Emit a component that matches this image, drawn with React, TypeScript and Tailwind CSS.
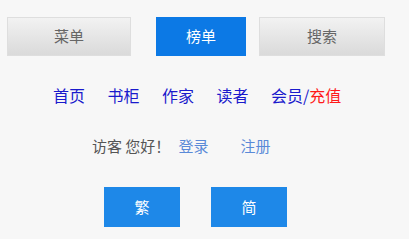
import React from "react";

const font = "font-['Microsoft_YaHei','Noto_Sans_CJK_SC',sans-serif]";

const navItems = ["首页", "书柜", "作家", "读者"];

const App = () => {
  return (
    <div className={`w-[409px] h-[239px] bg-[#f7f7f7] ${font} overflow-hidden`}>
      <div className="w-[391px]">
        {/* 顶部按钮 */}
        <div className="flex pt-[17px] pl-[7px]">
          <a className="w-[124px] h-[39px] flex items-center justify-center border border-[#dedede] bg-gradient-to-b from-[#f2f2f2] to-[#dadada] text-[15px] text-[#666]">
            菜单
          </a>
          <a className="ml-[25px] w-[90px] h-[39px] flex items-center justify-center bg-[#0c79e5] text-[15px] text-white">
            榜单
          </a>
          <a className="ml-[13px] w-[126px] h-[39px] flex items-center justify-center border border-[#dedede] bg-gradient-to-b from-[#f2f2f2] to-[#dadada] text-[15px] text-[#666]">
            搜索
          </a>
        </div>

        {/* 导航 */}
        <div className="flex pl-[53px] mt-[29px] gap-[22.5px] text-[16px] leading-[20px] text-[#1a1acc]">
          {navItems.map((item) => (
            <a key={item}>{item}</a>
          ))}
          <a>
            会员/<span className="text-[#ff1a1a]">充值</span>
          </a>
        </div>

        {/* 登录 */}
        <div className="flex pl-[92px] mt-[31px] text-[15px] leading-[20px]">
          <span className="text-[#555]">访客 您好！</span>
          <a className="ml-[8px] text-[#5a8ad8]">登录</a>
          <a className="ml-[32px] text-[#5a8ad8]">注册</a>
        </div>

        {/* 繁简切换 */}
        <div className="flex justify-center gap-[31px] mt-[31px]">
          <a className="w-[76px] h-[40px] flex items-center justify-center bg-[#1e88e8] text-[15px] text-white">
            繁
          </a>
          <a className="w-[76px] h-[40px] flex items-center justify-center bg-[#1e88e8] text-[15px] text-white">
            简
          </a>
        </div>
      </div>
    </div>
  );
};

export default App;
